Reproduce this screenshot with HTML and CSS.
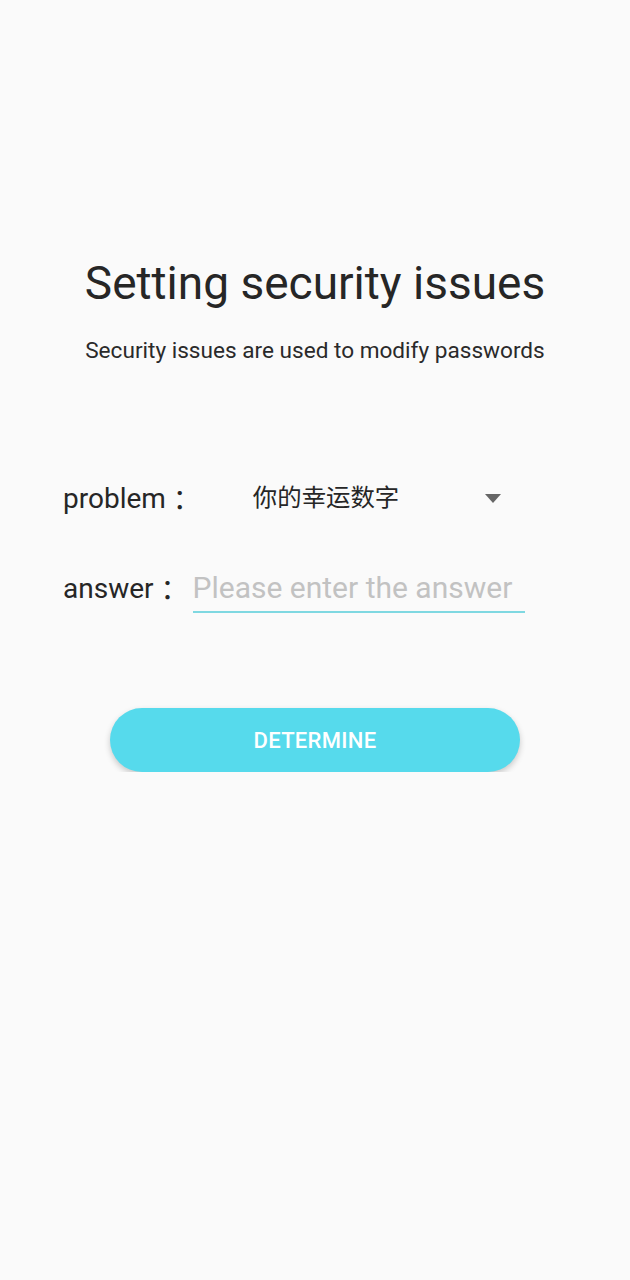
FILE: index.html
```html
<!DOCTYPE html>
<html lang="en">
<head>
<meta charset="utf-8">
<title>Setting security issues</title>
<link rel="stylesheet" href="styles.css">
</head>
<body>
<main class="page">
  <header class="head">
    <h1 class="title">Setting security issues</h1>
    <p class="subtitle">Security issues are used to modify passwords</p>
  </header>
  <section class="form">
    <div class="row">
      <span class="label">problem<span class="colon">：</span></span>
      <div class="spinner">
        <span class="spinner-text">你的幸运数字</span>
        <svg class="arrow" width="16" height="10" viewBox="0 0 16 10"><path d="M0 0 L16 0 L8 9 Z" fill="#666"/></svg>
      </div>
    </div>
    <div class="row row-answer">
      <span class="label">answer<span class="colon">：</span></span>
      <div class="field">
        <input class="input" type="text" placeholder="Please enter the answer">
      </div>
    </div>
  </section>
  <div class="actions">
    <button class="btn" type="button">DETERMINE</button>
  </div>
</main>
</body>
</html>
```
FILE: styles.css
```css
html, body {
  margin: 0;
  padding: 0;
  background: #fafafa;
}
body {
  font-family: Roboto, "Noto Sans CJK SC", sans-serif;
  color: #262626;
}
.page {
  display: flex;
  flex-direction: column;
  align-items: center;
  padding-top: 254px;
}
.head {
  display: flex;
  flex-direction: column;
  align-items: center;
}
.title {
  margin: 0;
  font-size: 46px;
  font-weight: 400;
  line-height: 58px;
  color: #262626;
}
.subtitle {
  margin: 24px 0 0;
  font-size: 22.6px;
  line-height: 30px;
  color: #2a2a2a;
}
.form {
  align-self: stretch;
  padding: 0 105px 0 63px;
  margin-top: 107px;
  display: flex;
  flex-direction: column;
  gap: 47px;
}
.row {
  display: flex;
  align-items: center;
  height: 46px;
}
.row-answer {
  align-items: baseline;
}
.label {
  font-size: 28px;
  color: #262626;
  white-space: nowrap;
}
.colon {
  font-family: "Noto Sans CJK JP", sans-serif;
  position: relative;
  top: 3px;
}
.spinner {
  flex: 1;
  display: flex;
  align-items: center;
  justify-content: space-between;
  padding-left: 59px;
  padding-right: 20px;
}
.spinner-text {
  font-family: "Noto Sans CJK SC", sans-serif;
  font-size: 24.4px;
  line-height: 32px;
  color: #262626;
}
.arrow {
  display: block;
  margin-right: 4px;
  margin-top: 5px;
}
.field {
  flex: 1;
  margin-left: 11px;
  border-bottom: 2px solid #7fd8e1;
  padding-bottom: 4px;
}
.input {
  display: block;
  width: 100%;
  border: none;
  outline: none;
  background: transparent;
  padding: 0;
  font-family: Roboto, sans-serif;
  font-size: 30px;
  line-height: 38px;
  color: #262626;
}
.input::placeholder {
  color: #c2c2c2;
}
.actions {
  margin-top: 96px;
}
.btn {
  width: 410px;
  height: 64px;
  border: none;
  border-radius: 32px;
  background: #56daec;
  color: #ffffff;
  font-family: Roboto, sans-serif;
  font-weight: 500;
  font-size: 22px;
  letter-spacing: 0.3px;
  box-shadow: 0 3px 6px rgba(0, 0, 0, 0.2);
  cursor: pointer;
}
```
